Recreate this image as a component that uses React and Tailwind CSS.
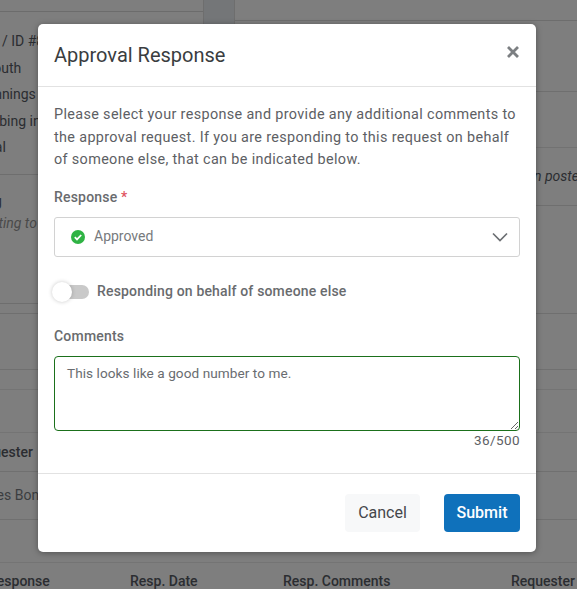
import React from "react";

const font = { fontFamily: "Roboto, 'Liberation Sans', sans-serif" };

function Backdrop() {
  return (
    <div className="flex h-[589px] w-[577px] flex-col bg-[#7e7e7e] text-[14px] text-[#2b2d31]">
      <div className="flex h-[314px] shrink-0 border-b border-[#6f6f6f]">
        <div className="flex w-[204px] shrink-0 flex-col border-r border-[#6e6e6e] whitespace-nowrap">
          <div className="h-[12px] border-b border-[#6c6c6c]"></div>
          <div className="flex h-[163px] flex-col border-b border-[#6e6e6e] pt-[16px] leading-[26.5px]">
            <div className="pl-[2px]">/ ID #8</div>
            <div className="-ml-[15px]">South</div>
            <div className="-ml-[21px]">Jennings</div>
            <div className="-ml-[33px]">Plumbing in</div>
            <div className="-ml-[24px]">Final</div>
          </div>
          <div className="flex h-[129px] flex-col border-b border-[#6e6e6e] pt-[15px] leading-[22px]">
            <div className="-ml-[6px]">g</div>
            <div className="-ml-[24px] italic text-[#4a4a4a]">Waiting to</div>
          </div>
        </div>
        <div className="w-[30px] shrink-0 bg-[#747678]"></div>
        <div className="flex min-w-0 flex-1 flex-col border-l border-[#6e6e6e] whitespace-nowrap">
          <div className="h-[21px] border-b border-[#6d6d6d]"></div>
          <div className="h-[71px] border-b border-[#6f6f6f]"></div>
          <div className="h-[56px] border-b border-[#727272]"></div>
          <div className="flex h-[58px] items-center border-b border-[#6f6f6f] pl-[299px] italic">n posted</div>
        </div>
      </div>
      <div className="h-[56px] shrink-0 border-b border-[#707070]"></div>
      <div className="h-[20px] shrink-0 border-b border-[#747474]"></div>
      <div className="h-[43px] shrink-0 border-b border-[#747474]"></div>
      <div className="flex h-[39px] shrink-0 items-center border-b border-[#707070] font-medium whitespace-nowrap">
        <span className="-ml-[31px]">Requester</span>
      </div>
      <div className="flex h-[48px] shrink-0 items-center border-b border-[#707070] whitespace-nowrap text-[#3b3d40]">
        <span className="-ml-[31px]">James Bond</span>
      </div>
      <div className="h-[43px] shrink-0 border-b border-[#747474]"></div>
      <div className="grid h-[26px] shrink-0 grid-cols-[130px_153px_228px_1fr] items-start pt-[8px] leading-[21px] font-medium whitespace-nowrap">
        <span className="-ml-[12px]">Response</span>
        <span>Resp. Date</span>
        <span>Resp. Comments</span>
        <span>Requester</span>
      </div>
    </div>
  );
}

export default function App() {
  return (
    <div className="relative h-[589px] w-[577px] overflow-hidden" style={font}>
      <Backdrop />
      <div className="absolute top-[24px] left-[38px] flex h-[528px] w-[498px] flex-col rounded-[5px] bg-white shadow-[0_1px_6px_rgba(0,0,0,0.35)]">
        <div className="flex h-[63px] shrink-0 items-center justify-between border-b border-[#e2e2e2] pr-[16px] pl-[16px]">
          <h2 className="text-[20px] leading-[24px] font-normal text-[#3a3d40]">Approval Response</h2>
          <svg className="mb-[6px] h-[14px] w-[14px]" viewBox="0 0 14 14" fill="none" stroke="#7c7f82" strokeWidth="2.8" aria-label="Close">
            <path d="M2 2 12 12M12 2 2 12" />
          </svg>
        </div>
        <div className="flex flex-1 flex-col px-[16px] pt-[17px]">
          <p className="text-[14.4px] leading-[22.5px] tracking-[0.35px] text-[#5d6064]">
            Please select your response and provide any additional comments to the approval request. If you are responding to this request on behalf of someone else, that can be indicated below.
          </p>
          <div className="mt-[15px] text-[14px] leading-[20px] font-medium tracking-[0.2px] text-[#696b6e]">
            Response <span className="text-[#e05260]">*</span>
          </div>
          <div className="mt-[10px] flex h-[40px] items-center justify-between rounded-[3px] border border-[#d2d2d2] pr-[11px] pl-[16px]">
            <div className="flex items-center gap-[9px]">
              <svg className="h-[14px] w-[14px]" viewBox="0 0 14 14">
                <circle cx="7" cy="7" r="7" fill="#2fb344" />
                <path d="M3.8 7.2 6 9.4l4.2-4.4" fill="none" stroke="#fff" strokeWidth="1.8" />
              </svg>
              <span className="text-[14px] text-[#777a7d]">Approved</span>
            </div>
            <svg className="h-[10px] w-[16px]" viewBox="0 0 16 10" fill="none" stroke="#6c6f73" strokeWidth="1.7">
              <path d="M1 1.5 8 8.5l7-7" />
            </svg>
          </div>
          <div className="mt-[25px] flex h-[20px] items-center">
            <div className="relative h-[14px] w-[35px] rounded-full bg-[#c9c9c9]">
              <div className="absolute -top-[3px] -left-[2px] h-[20px] w-[20px] rounded-full bg-white shadow-[0_0_4px_rgba(0,0,0,0.22)]"></div>
            </div>
            <span className="ml-[8px] text-[14px] font-medium tracking-[0.17px] text-[#696b6e]">Responding on behalf of someone else</span>
          </div>
          <label className="mt-[24px] block text-[14px] leading-[20px] font-medium tracking-[0.2px] text-[#696b6e]">Comments</label>
          <textarea
            readOnly
            className="mt-[10px] block h-[75px] w-full resize-y rounded-[4px] border border-[#1b701b] px-[12px] py-[8px] text-[13.6px] leading-[17px] tracking-[0.06px] text-[#696c70] outline-none"
            defaultValue="This looks like a good number to me."
          />
          <div className="mt-[1px] text-right text-[13.5px] leading-[17px] tracking-[0.4px] text-[#5d6064]">36/500</div>
        </div>
        <div className="flex h-[79px] shrink-0 items-start justify-end gap-[24px] border-t border-[#e2e2e2] px-[16px] pt-[20px]">
          <button className="h-[38px] w-[75px] rounded-[4px] bg-[#f7f8f9] text-[16px] text-[#44474b]">Cancel</button>
          <button className="h-[38px] w-[76px] rounded-[4px] bg-[#0f71bb] text-[16px] font-medium text-white">Submit</button>
        </div>
      </div>
    </div>
  );
}
